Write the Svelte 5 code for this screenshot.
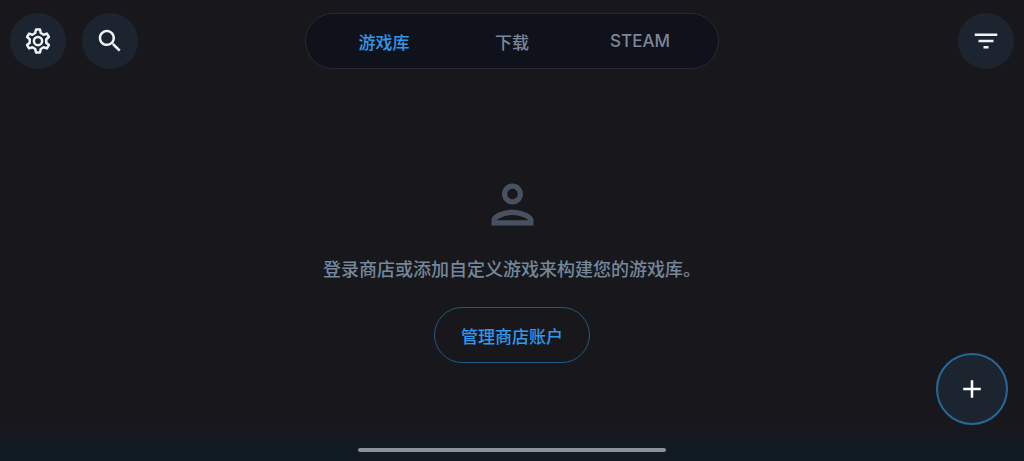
<script>
  const tabs = [
    { id: 'library', label: '游戏库' },
    { id: 'downloads', label: '下载' },
    { id: 'steam', label: 'STEAM' },
  ];

  let active = $state('library');
</script>

<div class="screen">
  <header>
    <div class="actions">
      <button class="round" aria-label="设置">
        <svg class="gear" viewBox="0 0 24 24">
          <path d="M10.4 2.8h3.2l.6 2.8L16.5 7l2.6-.9 1.6 2.7-2.1 1.8v2.8l2.1 1.8-1.6 2.7-2.6-.9-2.3 1.4-.6 2.8h-3.2l-.6-2.8L7.5 17l-2.6.9-1.6-2.7 2.1-1.8v-2.8L3.3 8.8l1.6-2.7 2.6.9 2.3-1.4z"/>
          <circle cx="12" cy="12" r="3.3"/>
        </svg>
      </button>
      <button class="round" aria-label="搜索">
        <svg viewBox="0 0 24 24"><path d="M15.5 14h-.79l-.28-.27C15.41 12.59 16 11.11 16 9.5 16 5.91 13.09 3 9.5 3S3 5.91 3 9.5 5.91 16 9.5 16c1.61 0 3.09-.59 4.23-1.57l.27.28v.79l5 4.99L20.49 19l-4.99-5zm-6 0C7.01 14 5 11.99 5 9.5S7.01 5 9.5 5 14 7.01 14 9.5 11.99 14 9.5 14z"/></svg>
      </button>
    </div>

    <nav>
      {#each tabs as tab}
        <button class:active={active === tab.id} onclick={() => active = tab.id}>{tab.label}</button>
      {/each}
    </nav>

    <div class="actions end">
      <button class="round" aria-label="筛选">
        <svg viewBox="0 0 24 24"><path d="M10 18h4v-2h-4v2zM3 6v2h18V6H3zm3 7h12v-2H6v2z"/></svg>
      </button>
    </div>
  </header>

  <main>
    <svg class="person" viewBox="0 0 24 24"><path d="M12 6c1.1 0 2 .9 2 2s-.9 2-2 2-2-.9-2-2 .9-2 2-2m0 10c2.7 0 5.8 1.29 6 2H6c.23-.72 3.31-2 6-2m0-12C9.79 4 8 5.79 8 8s1.79 4 4 4 4-1.79 4-4-1.79-4-4-4zm0 10c-2.67 0-8 1.34-8 4v2h16v-2c0-2.66-5.33-4-8-4z"/></svg>
    <p>登录商店或添加自定义游戏来构建您的游戏库。</p>
    <button class="manage">管理商店账户</button>
  </main>

  <button class="fab" aria-label="添加">
    <svg viewBox="0 0 24 24"><path d="M19 13h-6v6h-2v-6H5v-2h6V5h2v6h6v2z"/></svg>
  </button>
  <div class="home-bar"></div>
</div>

<style>
  :global(body) {
    margin: 0;
    background: #18181c;
  }

  .screen {
    position: relative;
    display: flex;
    flex-direction: column;
    box-sizing: border-box;
    min-height: 100vh;
    background: linear-gradient(to top, #111b25 0, #131a22 16px, #18181c 36px);
    font-family: Inter, "Noto Sans CJK SC", sans-serif;
    font-weight: 500;
  }

  button {
    margin: 0;
    padding: 0;
    border: none;
    background: none;
    font: inherit;
    cursor: pointer;
  }

  svg {
    display: block;
    width: 30px;
    height: 30px;
    fill: currentColor;
  }

  .gear {
    fill: none;
    stroke: currentColor;
    stroke-width: 2;
    stroke-linejoin: round;
  }

  header {
    display: grid;
    grid-template-columns: 1fr minmax(0, 414px) 1fr;
    padding: 13px 10px 0;
  }

  .actions {
    display: flex;
    gap: 16px;
  }

  .actions.end {
    justify-content: flex-end;
  }

  .round,
  .fab {
    display: flex;
    align-items: center;
    justify-content: center;
    border-radius: 50%;
    background: #1c252f;
    color: #eef3fb;
  }

  .round {
    width: 56px;
    height: 56px;
  }

  nav {
    display: flex;
    box-sizing: border-box;
    height: 56px;
    padding: 0 14px;
    border: 1px solid #292a30;
    border-radius: 28px;
    background: #10121b;
  }

  nav button {
    flex: 1;
    color: #7c8698;
    font-size: 17px;
  }

  nav button.active {
    color: #3199ea;
  }

  main {
    flex: 1;
    display: flex;
    flex-direction: column;
    align-items: center;
    justify-content: center;
    padding-top: 6px;
  }

  .person {
    width: 63px;
    height: 63px;
    color: #47515f;
  }

  p {
    margin: 20px 0 24px;
    color: #74879b;
    font-size: 18px;
    line-height: 27px;
  }

  .manage {
    height: 56px;
    padding: 0 26px;
    border: 1px solid #235b84;
    border-radius: 28px;
    color: #3199ea;
    font-size: 17px;
  }

  .fab {
    position: absolute;
    right: 16px;
    bottom: 36px;
    width: 72px;
    height: 72px;
    border: 2px solid #24699a;
    color: #fff;
  }

  .home-bar {
    position: absolute;
    bottom: 9px;
    left: 35%;
    width: 30%;
    height: 4px;
    border-radius: 2px;
    background: #8b9299;
  }
</style>
